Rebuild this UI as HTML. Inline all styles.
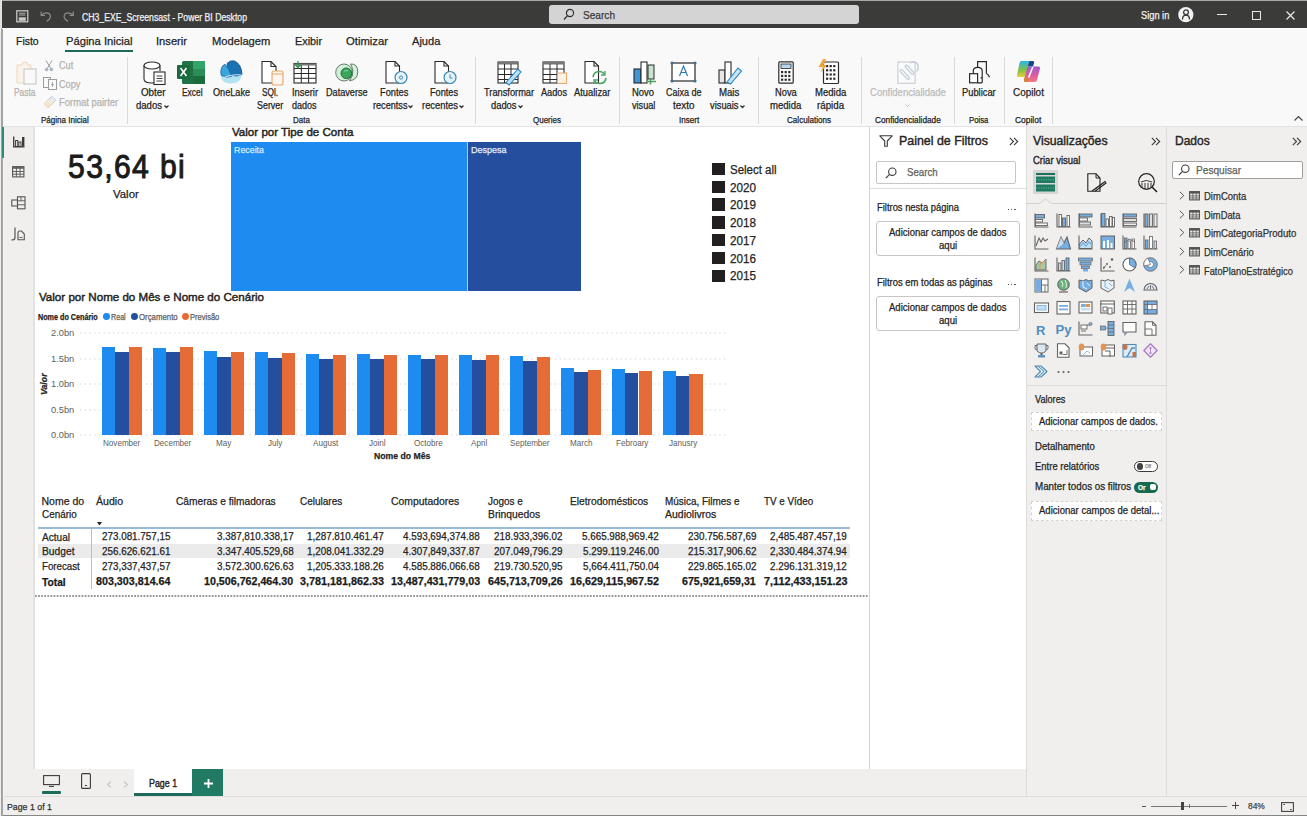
<!DOCTYPE html>
<html><head><meta charset="utf-8">
<style>
*{box-sizing:border-box;margin:0;padding:0}
html,body{width:1307px;height:816px;overflow:hidden;background:#f0efee;font-family:"Liberation Sans",sans-serif;color:#252423;position:relative}
.a{position:absolute}
.t{position:absolute;white-space:nowrap;line-height:1;transform-origin:0 0;-webkit-text-stroke:0.25px currentColor}
svg{overflow:visible}
</style></head><body>
<div class="a" style="left:0px;top:0px;width:1307px;height:1px;background:#a9a9a9;"></div><div class="a" style="left:0px;top:1px;width:1307px;height:27px;background:#3b3b3a;"></div><div class="a" style="left:0px;top:28px;width:1307px;height:99px;background:#f9f9f9;"></div><div class="a" style="left:0px;top:126px;width:1307px;height:1px;background:#e3e3e3;"></div><div class="a" style="left:0px;top:127px;width:34px;height:670px;background:#f0efee;"></div><div class="a" style="left:34px;top:127px;width:835px;height:642px;background:#ffffff;"></div><div class="a" style="left:34px;top:769px;width:992px;height:28px;background:#f0efee;"></div><div class="a" style="left:869px;top:127px;width:157px;height:642px;background:#ffffff;"></div><div class="a" style="left:869px;top:127px;width:1px;height:642px;background:#d4d4d4;"></div><div class="a" style="left:1026px;top:127px;width:141px;height:670px;background:#f0efee;"></div><div class="a" style="left:1026px;top:127px;width:1px;height:670px;background:#dcdcdc;"></div><div class="a" style="left:1167px;top:127px;width:140px;height:670px;background:#f0efee;"></div><div class="a" style="left:1166px;top:127px;width:1px;height:670px;background:#dcdcdc;"></div><div class="a" style="left:0px;top:796px;width:1307px;height:1px;background:#dddddd;"></div><div class="a" style="left:0px;top:797px;width:1307px;height:18px;background:#f0efee;"></div><div class="a" style="left:0px;top:815px;width:1307px;height:1px;background:#858585;"></div><div class="a" style="left:0px;top:0px;width:2px;height:28px;background:#e4e4e4;"></div><div class="a" style="left:0px;top:28px;width:1px;height:788px;background:#eeeeee;"></div><div class="a" style="left:1px;top:28px;width:2px;height:788px;background:#a3a3a3;"></div><div class="a" style="left:3px;top:127px;width:1px;height:670px;background:#f8f8f7;"></div><svg class="a" style="left:16px;top:9.5px;" width="12.5" height="12.5" viewBox="0 0 12.5 12.5"><rect x="0.8" y="0.8" width="11" height="11" fill="none" stroke="#d2d2d2" stroke-width="1.2"/><path d="M3 3.2 H9.5 M3 5 H9.5" stroke="#bdbdbd" stroke-width="0.9"/><rect x="2.8" y="7.3" width="7" height="3.5" fill="#c9c9c9"/></svg><svg class="a" style="left:39.5px;top:9.5px;" width="11.5" height="12" viewBox="0 0 11.5 12"><path d="M1.5 5 Q6 1.5 9 3.5 Q11.5 6 9.5 9 L6.5 11.5" fill="none" stroke="#8c8c8c" stroke-width="1.2"/><path d="M1.2 1.5 V5.5 H5" fill="none" stroke="#8c8c8c" stroke-width="1.2"/></svg><svg class="a" style="left:62.5px;top:9.5px;" width="11.5" height="12" viewBox="0 0 11.5 12"><path d="M10 5 Q5.5 1.5 2.5 3.5 Q0 6 2 9 L5 11.5" fill="none" stroke="#8c8c8c" stroke-width="1.2"/><path d="M10.3 1.5 V5.5 H6.5" fill="none" stroke="#8c8c8c" stroke-width="1.2"/></svg><div class="t" style="left:82.30px;top:12.54px;font-size:10px;color:#f2f2f2;transform:scaleX(0.8680);">CH3_EXE_Screensast - Power BI Desktop</div><div class="a" style="left:549px;top:5px;width:310px;height:19px;background:#d4d4d4;border-radius:3px;"></div><svg class="a" style="left:563px;top:8px;" width="12" height="13" viewBox="0 0 12 13"><circle cx="7" cy="5" r="3.6" fill="none" stroke="#333" stroke-width="1.2"/><path d="M4.5 7.6 L1 11.5" stroke="#333" stroke-width="1.3"/></svg><div class="t" style="left:583.40px;top:9.69px;font-size:11px;color:#3a3a3a;transform:scaleX(0.9181);">Search</div><div class="t" style="left:1141.40px;top:10.11px;font-size:10.5px;color:#f2f2f2;transform:scaleX(0.8815);">Sign in</div><svg class="a" style="left:1177.5px;top:6.8px;" width="16" height="16" viewBox="0 0 16 16"><circle cx="7.8" cy="7.7" r="7.6" fill="#f2f2f2"/><circle cx="8" cy="5.3" r="2.4" fill="none" stroke="#3a3a3a" stroke-width="1.3"/><path d="M4.5 12.5 Q4.5 8.2 8 8 Q11.5 8.2 11.5 12.5" fill="none" stroke="#3a3a3a" stroke-width="1.3"/></svg><div class="a" style="left:1217px;top:14px;width:10px;height:1.3px;background:#e8e8e8;"></div><div class="a" style="left:1252px;top:11px;width:8.5px;height:8.5px;background:transparent;border:1.2px solid #e8e8e8;"></div><svg class="a" style="left:1286px;top:10.5px;" width="9" height="9" viewBox="0 0 9 9"><path d="M0.5 0.5 L8.5 8.5 M8.5 0.5 L0.5 8.5" stroke="#e8e8e8" stroke-width="1.2"/></svg><div class="t" style="left:16.00px;top:35.69px;font-size:11px;color:#252423;transform:scaleX(0.9523);">Fisto</div><div class="t" style="left:65.50px;top:35.69px;font-size:11px;color:#252423;transform:scaleX(1.0163);">Página Inicial</div><div class="t" style="left:155.70px;top:35.69px;font-size:11px;color:#252423;transform:scaleX(1.0143);">Inserir</div><div class="t" style="left:211.50px;top:35.69px;font-size:11px;color:#252423;transform:scaleX(1.0143);">Modelagem</div><div class="t" style="left:294.60px;top:35.69px;font-size:11px;color:#252423;transform:scaleX(0.9853);">Exibir</div><div class="t" style="left:345.50px;top:35.69px;font-size:11px;color:#252423;transform:scaleX(1.0258);">Otimizar</div><div class="t" style="left:412.00px;top:35.69px;font-size:11px;color:#252423;transform:scaleX(1.0059);">Ajuda</div><div class="a" style="left:65px;top:50px;width:67.5px;height:2px;background:#1b6a5a;"></div><div class="a" style="left:2px;top:28px;width:1305px;height:1px;background:#ffffff;"></div><div class="a" style="left:127px;top:57px;width:1px;height:67px;background:#dadada;"></div><div class="a" style="left:475px;top:57px;width:1px;height:67px;background:#dadada;"></div><div class="a" style="left:619px;top:57px;width:1px;height:67px;background:#dadada;"></div><div class="a" style="left:758px;top:57px;width:1px;height:67px;background:#dadada;"></div><div class="a" style="left:861px;top:57px;width:1px;height:67px;background:#dadada;"></div><div class="a" style="left:953.5px;top:57px;width:1px;height:67px;background:#dadada;"></div><div class="a" style="left:1004px;top:57px;width:1px;height:67px;background:#dadada;"></div><div class="a" style="left:1052px;top:57px;width:1px;height:67px;background:#dadada;"></div><div class="t" style="left:13.80px;top:87.94px;font-size:10px;color:#b4b2b0;transform:scaleX(0.8369);">Pasta</div><div class="t" style="left:58.90px;top:61.13px;font-size:10px;color:#b4b2b0;transform:scaleX(0.9125);">Cut</div><div class="t" style="left:59.00px;top:79.83px;font-size:10px;color:#b4b2b0;transform:scaleX(0.9124);">Copy</div><div class="t" style="left:59.40px;top:97.53px;font-size:10px;color:#b4b2b0;transform:scaleX(0.9428);">Format pairter</div><div class="t" style="left:140.80px;top:87.94px;font-size:10px;color:#252423;transform:scaleX(0.9796);">Obter</div><div class="t" style="left:136.00px;top:100.53px;font-size:10px;color:#252423;transform:scaleX(0.9543);">dados</div><div class="t" style="left:181.50px;top:87.94px;font-size:10px;color:#252423;transform:scaleX(0.8383);">Excel</div><div class="t" style="left:212.80px;top:87.94px;font-size:10px;color:#252423;transform:scaleX(0.9141);">OneLake</div><div class="t" style="left:261.80px;top:87.94px;font-size:10px;color:#252423;transform:scaleX(0.8278);">SQl.</div><div class="t" style="left:257.00px;top:100.53px;font-size:10px;color:#252423;transform:scaleX(0.8895);">Server</div><div class="t" style="left:291.70px;top:87.94px;font-size:10px;color:#252423;transform:scaleX(0.9358);">Inserir</div><div class="t" style="left:292.40px;top:100.53px;font-size:10px;color:#252423;transform:scaleX(0.9029);">dados</div><div class="t" style="left:325.80px;top:87.94px;font-size:10px;color:#252423;transform:scaleX(0.9128);">Dataverse</div><div class="t" style="left:379.90px;top:87.94px;font-size:10px;color:#252423;transform:scaleX(0.9257);">Fontes</div><div class="t" style="left:372.50px;top:100.53px;font-size:10px;color:#252423;transform:scaleX(0.9129);">recentss</div><div class="t" style="left:429.60px;top:87.94px;font-size:10px;color:#252423;transform:scaleX(0.9159);">Fontes</div><div class="t" style="left:421.50px;top:100.53px;font-size:10px;color:#252423;transform:scaleX(0.9386);">recentes</div><div class="t" style="left:483.60px;top:87.94px;font-size:10px;color:#252423;transform:scaleX(0.9264);">Transformar</div><div class="t" style="left:491.30px;top:100.53px;font-size:10px;color:#252423;transform:scaleX(0.9359);">dados</div><div class="t" style="left:541.00px;top:87.94px;font-size:10px;color:#252423;transform:scaleX(0.9170);">Aados</div><div class="t" style="left:574.40px;top:87.94px;font-size:10px;color:#252423;transform:scaleX(0.9356);">Atualizar</div><div class="t" style="left:632.20px;top:87.94px;font-size:10px;color:#252423;transform:scaleX(0.9467);">Novo</div><div class="t" style="left:631.80px;top:100.53px;font-size:10px;color:#252423;transform:scaleX(0.9153);">visual</div><div class="t" style="left:665.90px;top:87.94px;font-size:10px;color:#252423;transform:scaleX(0.8995);">Caixa de</div><div class="t" style="left:672.60px;top:100.53px;font-size:10px;color:#252423;transform:scaleX(0.9871);">texto</div><div class="t" style="left:718.70px;top:87.94px;font-size:10px;color:#252423;transform:scaleX(0.9615);">Mais</div><div class="t" style="left:710.40px;top:100.53px;font-size:10px;color:#252423;transform:scaleX(0.9324);">visuais</div><div class="t" style="left:775.00px;top:87.94px;font-size:10px;color:#252423;transform:scaleX(0.9295);">Nova</div><div class="t" style="left:770.40px;top:100.53px;font-size:10px;color:#252423;transform:scaleX(0.9574);">medida</div><div class="t" style="left:814.80px;top:87.94px;font-size:10px;color:#252423;transform:scaleX(0.9543);">Medida</div><div class="t" style="left:817.00px;top:100.53px;font-size:10px;color:#252423;transform:scaleX(0.9749);">rápida</div><div class="t" style="left:869.50px;top:87.94px;font-size:10px;color:#bcbcbc;transform:scaleX(0.9547);">Confidencialidade</div><div class="t" style="left:962.20px;top:87.94px;font-size:10px;color:#252423;transform:scaleX(0.9328);">Publicar</div><div class="t" style="left:1012.70px;top:87.94px;font-size:10px;color:#252423;transform:scaleX(0.9927);">Copilot</div><svg class="a" style="left:164.0px;top:105px;" width="5" height="3" viewBox="0 0 5 3"><path d="M0.5 0.5 L2.5 2.5 L4.5 0.5" fill="none" stroke="#333" stroke-width="1.3"/></svg><svg class="a" style="left:408.0px;top:105px;" width="5" height="3" viewBox="0 0 5 3"><path d="M0.5 0.5 L2.5 2.5 L4.5 0.5" fill="none" stroke="#333" stroke-width="1.3"/></svg><svg class="a" style="left:459.0px;top:105px;" width="5" height="3" viewBox="0 0 5 3"><path d="M0.5 0.5 L2.5 2.5 L4.5 0.5" fill="none" stroke="#333" stroke-width="1.3"/></svg><svg class="a" style="left:518.0px;top:105px;" width="5" height="3" viewBox="0 0 5 3"><path d="M0.5 0.5 L2.5 2.5 L4.5 0.5" fill="none" stroke="#333" stroke-width="1.3"/></svg><svg class="a" style="left:739.5px;top:105px;" width="5" height="3" viewBox="0 0 5 3"><path d="M0.5 0.5 L2.5 2.5 L4.5 0.5" fill="none" stroke="#333" stroke-width="1.3"/></svg><svg class="a" style="left:904.5px;top:104px;" width="5" height="3" viewBox="0 0 5 3"><path d="M0.5 0.5 L2.5 2.5 L4.5 0.5" fill="none" stroke="#bbb" stroke-width="1"/></svg><div class="t" style="left:41.30px;top:115.80px;font-size:8.5px;color:#252423;transform:scaleX(0.9434);">Página Inicial</div><div class="t" style="left:293.20px;top:115.80px;font-size:8.5px;color:#252423;transform:scaleX(0.9357);">Data</div><div class="t" style="left:533.00px;top:115.80px;font-size:8.5px;color:#252423;transform:scaleX(0.9408);">Queries</div><div class="t" style="left:679.20px;top:115.80px;font-size:8.5px;color:#252423;transform:scaleX(0.9549);">Insert</div><div class="t" style="left:787.20px;top:115.80px;font-size:8.5px;color:#252423;transform:scaleX(0.9524);">Calculations</div><div class="t" style="left:874.50px;top:115.80px;font-size:8.5px;color:#252423;transform:scaleX(0.9737);">Confidencialidade</div><div class="t" style="left:969.40px;top:115.80px;font-size:8.5px;color:#252423;transform:scaleX(0.9124);">Poisa</div><div class="t" style="left:1014.90px;top:115.80px;font-size:8.5px;color:#252423;">Copilot</div><svg class="a" style="left:1294px;top:116px;" width="9" height="5" viewBox="0 0 9 5"><path d="M0.5 4.5 L4.5 0.5 L8.5 4.5" fill="none" stroke="#444" stroke-width="1.1"/></svg><svg class="a" style="left:16px;top:61px;" width="21" height="24" viewBox="0 0 21 24"><path d="M1 4 H6 Q6 1 9 1 Q12 1 12 4 H15 V22 H1 Z" fill="#fbf3ea" stroke="#f0d6bd" stroke-width="1"/><rect x="8" y="8" width="12" height="15" fill="#f9f9f9" stroke="#c4c4c4" stroke-width="1"/></svg><svg class="a" style="left:44px;top:59.5px;" width="10" height="12" viewBox="0 0 10 12"><path d="M2 0.5 L6.5 8 M8 0.5 L3.5 8" stroke="#9aa0a8" stroke-width="1"/><circle cx="2.6" cy="9.5" r="1.8" fill="#a8b4c4"/><circle cx="7.4" cy="9.5" r="1.8" fill="#a8b4c4"/></svg><svg class="a" style="left:42.5px;top:77px;" width="14" height="13" viewBox="0 0 14 13"><rect x="0.5" y="0.5" width="7" height="10" fill="none" stroke="#9c9c9c" stroke-width="1"/><rect x="5.5" y="2.5" width="8" height="10" fill="#f9f9f9" stroke="#9c9c9c" stroke-width="1"/><path d="M9.5 5 V10 M8 7.5 H11" stroke="#9c9c9c" stroke-width="0.8"/></svg><svg class="a" style="left:43px;top:96px;" width="13" height="12" viewBox="0 0 13 12"><path d="M1 8 L6 3 L10 7 L5 12 Z" fill="#f7ecda" stroke="#e6cfae" stroke-width="0.9"/><path d="M6 3 L9 0.5 L12.5 4 L10 7" fill="#e8eef5" stroke="#b9c4d0" stroke-width="0.9"/><path d="M3.5 9 L5.5 7 M5 10.5 L7.5 8" stroke="#e6cfae" stroke-width="0.8"/></svg><svg class="a" style="left:143px;top:61px;" width="23" height="25" viewBox="0 0 23 25"><path d="M1 4 V18 Q1 22 9 22 Q12 22 14 21.5" fill="#fff" stroke="#2a2a2a" stroke-width="1.1"/><ellipse cx="9" cy="4.5" rx="8" ry="3.5" fill="#fff" stroke="#2a2a2a" stroke-width="1.1"/><path d="M17 4.5 V10" stroke="#2a2a2a" stroke-width="1.1"/><rect x="11" y="11" width="11" height="12.5" fill="#fff" stroke="#2a2a2a" stroke-width="1.1"/><path d="M13.5 15 H19.5 M13.5 17.5 H19.5 M13.5 20 H19.5" stroke="#2a2a2a" stroke-width="0.9"/></svg><svg class="a" style="left:177px;top:61px;" width="28" height="23" viewBox="0 0 28 23"><rect x="5" y="0" width="23" height="23" rx="1.5" fill="#1f7244"/><rect x="16" y="0" width="12" height="8" fill="#33a46a"/><rect x="16" y="8" width="12" height="7" fill="#2b8c57"/><rect x="16" y="15" width="12" height="8" fill="#1c6b3d"/><rect x="0" y="4" width="13" height="14" rx="1" fill="#1a6a3c"/><path d="M3.5 7 L9.5 15 M9.5 7 L3.5 15" stroke="#fff" stroke-width="1.6"/></svg><svg class="a" style="left:220px;top:60px;" width="23" height="24" viewBox="0 0 23 24"><path d="M0.6 12.5 Q0 23.5 11 23.5 Q22 23.5 21.8 12.5 Z" fill="#b3e2f3"/><path d="M7 3.5 Q10 -0.2 14.5 1 Q21.5 4 22 14.5 Q17 17 12 15.5 Q9 14.5 8 11.5 Z" fill="#1b72b2" stroke="#0f4f86" stroke-width="0.8"/><path d="M1 9.5 Q2 5 5 4.2 Q9.5 8.5 11.5 16.5 Q6 18.5 1.5 15.5 Q0.2 12.5 1 9.5Z" fill="#3ca3dc" stroke="#145e98" stroke-width="0.7"/><path d="M3 18 Q11 14 21.5 15" fill="none" stroke="#d8f3fb" stroke-width="1"/></svg><svg class="a" style="left:261px;top:61px;" width="23" height="25" viewBox="0 0 23 25"><path d="M1 0.5 H10 L15 5.5 V22 H1 Z" fill="#fff" stroke="#2a2a2a" stroke-width="1.1"/><path d="M10 0.5 V5.5 H15" fill="none" stroke="#2a2a2a" stroke-width="1.1"/><rect x="11" y="10" width="11" height="14" rx="2" fill="#fdf6ee" stroke="#e8a76a" stroke-width="1.1"/><path d="M11 13 H22" stroke="#e8a76a" stroke-width="1"/></svg><svg class="a" style="left:293px;top:60.5px;" width="24" height="23" viewBox="0 0 24 23"><rect x="1" y="2.5" width="22" height="19.5" fill="#fff" stroke="#2a2a2a" stroke-width="1.1"/><path d="M1 7.5 H23 M1 12.5 H23 M1 17.3 H23 M8.3 2.5 V22 M15.6 2.5 V22" stroke="#2a2a2a" stroke-width="1"/><rect x="1" y="2.5" width="22" height="2" fill="#777"/><path d="M5 0 V6 M2.5 4 L5 6.5 L7.5 4" fill="none" stroke="#2e9a50" stroke-width="1.3"/></svg><svg class="a" style="left:335px;top:62.5px;" width="24" height="19" viewBox="0 0 24 19"><path d="M15.5 1 Q23 0.5 22.8 9 Q22.5 17 14.5 17.8 Q18.5 12.5 17.8 7.5 Q17 3.5 15.5 1Z" fill="#d3efd8" stroke="#44624c" stroke-width="0.8"/><ellipse cx="9" cy="9.5" rx="8.3" ry="8.5" fill="#d3efd8" stroke="#44624c" stroke-width="0.8"/><circle cx="11.3" cy="10.3" r="5.3" fill="#3aa65b" stroke="#1f6b3a" stroke-width="1"/><path d="M9 8.5 Q10.5 6.8 13 7.8" fill="none" stroke="#8fd8a2" stroke-width="1"/></svg><svg class="a" style="left:385px;top:61px;" width="24" height="23" viewBox="0 0 24 23"><path d="M1 0.5 H10 L14.5 5 V22 H1 Z" fill="#fff" stroke="#2a2a2a" stroke-width="1.1"/><path d="M10 0.5 V5 H14.5" fill="none" stroke="#2a2a2a" stroke-width="1.1"/><circle cx="16" cy="16.5" r="6" fill="#e6f3fb" stroke="#3a87b6" stroke-width="1.2"/><circle cx="16" cy="16.5" r="1.6" fill="none" stroke="#3a87b6" stroke-width="1"/></svg><svg class="a" style="left:434px;top:61px;" width="24" height="23" viewBox="0 0 24 23"><path d="M1 0.5 H10 L14.5 5 V22 H1 Z" fill="#fff" stroke="#2a2a2a" stroke-width="1.1"/><path d="M10 0.5 V5 H14.5" fill="none" stroke="#2a2a2a" stroke-width="1.1"/><circle cx="16" cy="16.5" r="6" fill="#e6f3fb" stroke="#3a87b6" stroke-width="1.2"/><path d="M16 13.5 V17 H18.5" fill="none" stroke="#3a87b6" stroke-width="1"/></svg><svg class="a" style="left:497px;top:61px;" width="25" height="23" viewBox="0 0 25 23"><rect x="1" y="1" width="20" height="21" fill="#fff" stroke="#2a2a2a" stroke-width="1.1"/><rect x="1" y="1" width="20" height="2.5" fill="#777"/><path d="M1 8 H21 M1 13.5 H21 M1 18.5 H21 M7.5 3 V22 M14 3 V22" stroke="#2a2a2a" stroke-width="1"/><path d="M9 21.5 L21 8 L24 11 L12 24 Z" fill="#bfe2f5" stroke="#2a86c0" stroke-width="1.1"/></svg><svg class="a" style="left:542px;top:61px;" width="25" height="23" viewBox="0 0 25 23"><rect x="1" y="1" width="21" height="21" fill="#fff" stroke="#2a2a2a" stroke-width="1.1"/><rect x="1" y="1" width="21" height="2.5" fill="#777"/><path d="M1 8 H22 M1 13.5 H22 M1 18.5 H22 M8 3 V22 M15 3 V22" stroke="#2a2a2a" stroke-width="1"/><rect x="15.5" y="12" width="9" height="10.5" fill="#fdf1e4" stroke="#e9a66b" stroke-width="1"/></svg><svg class="a" style="left:583.5px;top:61px;" width="23" height="23" viewBox="0 0 23 23"><path d="M1 0.5 H10 L14.5 5 V22 H1 Z" fill="#fff" stroke="#2a2a2a" stroke-width="1.1"/><path d="M10 0.5 V5 H14.5" fill="none" stroke="#2a2a2a" stroke-width="1.1"/><path d="M9 16 Q10 10 16 10.5 Q19 11 20.5 13" fill="none" stroke="#4aa564" stroke-width="1.6"/><path d="M22 17 Q21 23 15 22.5 Q12 22 10.5 20" fill="none" stroke="#4aa564" stroke-width="1.6"/><path d="M21 10 V14 H17" fill="none" stroke="#4aa564" stroke-width="1.3"/><path d="M10 23 V19 H14" fill="none" stroke="#4aa564" stroke-width="1.3"/></svg><svg class="a" style="left:632.5px;top:61px;" width="24" height="24" viewBox="0 0 24 24"><rect x="1" y="8" width="7" height="14" fill="#3f95d6" stroke="#2a2a2a" stroke-width="1.1"/><rect x="8" y="1" width="6" height="21" fill="#fff" stroke="#2a2a2a" stroke-width="1.1"/><rect x="15" y="4" width="6" height="14" fill="#c8e4cc" stroke="#2a2a2a" stroke-width="1"/><path d="M17.5 18 V23.5 M15 20.5 H23" stroke="#47a362" stroke-width="1.5"/></svg><svg class="a" style="left:670px;top:61px;" width="27" height="22" viewBox="0 0 27 22"><rect x="2" y="2" width="23" height="18" fill="#fff" stroke="#2a2a2a" stroke-width="1.2"/><circle cx="2" cy="2" r="1.6" fill="#3a6f98"/><circle cx="25" cy="2" r="1.6" fill="#3a6f98"/><circle cx="2" cy="20" r="1.6" fill="#3a6f98"/><circle cx="25" cy="20" r="1.6" fill="#3a6f98"/><path d="M9.5 15 L13.5 5 L17.5 15 M11 11.5 H16" fill="none" stroke="#2e78b3" stroke-width="1.2"/></svg><svg class="a" style="left:718px;top:61px;" width="24" height="23" viewBox="0 0 24 23"><rect x="1" y="9" width="6" height="13" fill="#e6e6e6" stroke="#2a2a2a" stroke-width="1.1"/><rect x="7" y="1" width="6" height="21" fill="#fff" stroke="#2a2a2a" stroke-width="1.1"/><path d="M9 21 L20 7 L23.5 10 L12.5 23 Z" fill="#c6e3f4" stroke="#2a86c0" stroke-width="1.1"/></svg><svg class="a" style="left:778px;top:61px;" width="16" height="23" viewBox="0 0 16 23"><rect x="0.8" y="0.8" width="14.4" height="21.4" rx="1" fill="#fff" stroke="#2a2a2a" stroke-width="1.2"/><rect x="3" y="3" width="10" height="4.5" fill="#b8d7ee" stroke="#2a2a2a" stroke-width="0.8"/><rect x="3.0" y="10.0" width="2.2" height="2.2" fill="#2a2a2a"/><rect x="3.0" y="13.8" width="2.2" height="2.2" fill="#2a2a2a"/><rect x="3.0" y="17.6" width="2.2" height="2.2" fill="#2a2a2a"/><rect x="6.6" y="10.0" width="2.2" height="2.2" fill="#2a2a2a"/><rect x="6.6" y="13.8" width="2.2" height="2.2" fill="#2a2a2a"/><rect x="6.6" y="17.6" width="2.2" height="2.2" fill="#2a2a2a"/><rect x="10.2" y="10.0" width="2.2" height="2.2" fill="#2a2a2a"/><rect x="10.2" y="13.8" width="2.2" height="2.2" fill="#2a2a2a"/><rect x="10.2" y="17.6" width="2.2" height="2.2" fill="#2a2a2a"/></svg><svg class="a" style="left:817.5px;top:59px;" width="21" height="25" viewBox="0 0 21 25"><rect x="5.5" y="3" width="15" height="21.5" rx="1" fill="#fff" stroke="#2a2a2a" stroke-width="1.2"/><rect x="8.0" y="6.0" width="2.2" height="2.2" fill="#2a2a2a"/><rect x="8.0" y="10.2" width="2.2" height="2.2" fill="#2a2a2a"/><rect x="8.0" y="14.4" width="2.2" height="2.2" fill="#2a2a2a"/><rect x="8.0" y="18.6" width="2.2" height="2.2" fill="#2a2a2a"/><rect x="11.6" y="6.0" width="2.2" height="2.2" fill="#2a2a2a"/><rect x="11.6" y="10.2" width="2.2" height="2.2" fill="#2a2a2a"/><rect x="11.6" y="14.4" width="2.2" height="2.2" fill="#2a2a2a"/><rect x="11.6" y="18.6" width="2.2" height="2.2" fill="#2a2a2a"/><rect x="15.2" y="6.0" width="2.2" height="2.2" fill="#2a2a2a"/><rect x="15.2" y="10.2" width="2.2" height="2.2" fill="#2a2a2a"/><rect x="15.2" y="14.4" width="2.2" height="2.2" fill="#2a2a2a"/><rect x="15.2" y="18.6" width="2.2" height="2.2" fill="#2a2a2a"/><path d="M5 0 L0.5 8 H5 L2 14 L9 6 H5.5 L8 0 Z" fill="#f2a43a"/></svg><svg class="a" style="left:896.5px;top:59.5px;" width="23" height="24" viewBox="0 0 23 24"><rect x="0.9" y="2" width="17.2" height="21.3" fill="#f8fafc" stroke="#cdcfd2" stroke-width="1.2"/><path d="M4.5 11 L11 18" stroke="#c3ccd6" stroke-width="4" stroke-linecap="round"/><path d="M4.5 11 L11 18" stroke="#f3f6f9" stroke-width="1.6" stroke-linecap="round"/><path d="M9.5 6.5 L15.5 13" stroke="#c3ccd6" stroke-width="4" stroke-linecap="round"/><path d="M9.5 6.5 L15.5 13" stroke="#f3f6f9" stroke-width="1.6" stroke-linecap="round"/><path d="M13 3 Q17.5 0.5 20.5 4 Q22.5 8 19.5 11.5" fill="none" stroke="#c3ccd6" stroke-width="1.4"/></svg><svg class="a" style="left:969px;top:61px;" width="22" height="23" viewBox="0 0 22 23"><path d="M8.6 6 V0.7 H17.4 V12.5" fill="none" stroke="#2a2a2a" stroke-width="1.2"/><path d="M4.3 12.7 V9.5 Q4.5 6.3 8.8 6.3 Q12.8 6.3 13.2 9.5 V21.8" fill="#fff" stroke="#2a2a2a" stroke-width="1.2"/><rect x="0.6" y="12.7" width="8" height="9.1" fill="#fff" stroke="#2a2a2a" stroke-width="1.2"/><path d="M8.6 21.8 H13.2 M11.5 16.8 H13.2" stroke="#2a2a2a" stroke-width="1.2"/><path d="M17.4 12.5 Q19.5 13.5 20.5 16.3" fill="none" stroke="#2a2a2a" stroke-width="1.2"/></svg><svg class="a" style="left:1016px;top:60px;" width="25" height="23" viewBox="0 0 25 23"><defs><linearGradient id="cg1" x1="0" y1="0" x2="0" y2="1"><stop offset="0" stop-color="#2fb2ec"/><stop offset="0.55" stop-color="#7cc243"/><stop offset="1" stop-color="#e6cf3a"/></linearGradient><linearGradient id="cg2" x1="0" y1="0" x2="0" y2="1"><stop offset="0" stop-color="#9d55d2"/><stop offset="0.6" stop-color="#e05f9c"/><stop offset="1" stop-color="#f47a78"/></linearGradient></defs><path d="M5 1 H16.5 Q18.5 1 18 3 L14 15.5 Q13.5 17 12 17 H2.5 Q0.5 17 1 15 L3.5 3 Q4 1 5 1Z" fill="url(#cg1)"/><path d="M13.5 1 H16.5 Q18.5 1 18 3 L17 6 H12Z" fill="#1d3f8f"/><path d="M12 6.5 H22.5 Q24.5 6.5 24 8.5 L21 20 Q20.5 22 19 22 H9.5 Q7.5 22 8 20 L11 8.5 Q11.5 6.5 12 6.5Z" fill="url(#cg2)"/><path d="M7.8 18 H12.5 L11.5 22 H9.5 Q7.5 22 8 20Z" fill="#d4862a"/><path d="M16.8 7 L12.6 17.5" stroke="#fff" stroke-width="1.6"/></svg><div class="a" style="left:33px;top:127px;width:1.8px;height:642px;background:#e2e2e2;"></div><div class="t" style="left:67.9px;top:150.04px;font-size:33.5px;color:#1b1b1b;letter-spacing:1.5px;transform:scaleX(0.9005);-webkit-text-stroke:1px #1b1b1b;">53,64 bi</div><div class="t" style="left:113.00px;top:189.07px;font-size:11.5px;color:#252423;transform:scaleX(0.9926);">Valor</div><div class="t" style="left:231.50px;top:127.43px;font-size:11.3px;color:#252423;transform:scaleX(1.0246);-webkit-text-stroke:0.45px #252423;">Valor por Tipe de Conta</div><div class="a" style="left:231px;top:142px;width:236px;height:148.5px;background:#1d8bf0;"></div><div class="a" style="left:467px;top:142px;width:1px;height:148.5px;background:#a3cfff;"></div><div class="a" style="left:468px;top:142px;width:113px;height:148.5px;background:#264e9e;"></div><div class="t" style="left:233.80px;top:144.99px;font-size:9.7px;color:#d6ecff;transform:scaleX(0.9133);">Receita</div><div class="t" style="left:470.80px;top:145.19px;font-size:9.7px;color:#e6ecf6;transform:scaleX(0.9285);">Despesa</div><div class="a" style="left:712.4px;top:162.9px;width:12.4px;height:12.3px;background:#231f20;"></div><div class="t" style="left:729.80px;top:163.84px;font-size:12px;color:#252423;transform:scaleX(0.9570);">Select all</div><div class="a" style="left:712.4px;top:180.67000000000002px;width:12.4px;height:12.3px;background:#231f20;"></div><div class="t" style="left:729.80px;top:181.61px;font-size:12px;color:#252423;transform:scaleX(0.9740);">2020</div><div class="a" style="left:712.4px;top:198.44px;width:12.4px;height:12.3px;background:#231f20;"></div><div class="t" style="left:729.80px;top:199.38px;font-size:12px;color:#252423;transform:scaleX(0.9740);">2019</div><div class="a" style="left:712.4px;top:216.21px;width:12.4px;height:12.3px;background:#231f20;"></div><div class="t" style="left:729.80px;top:217.15px;font-size:12px;color:#252423;transform:scaleX(0.9740);">2018</div><div class="a" style="left:712.4px;top:233.98000000000002px;width:12.4px;height:12.3px;background:#231f20;"></div><div class="t" style="left:729.80px;top:234.92px;font-size:12px;color:#252423;transform:scaleX(0.9740);">2017</div><div class="a" style="left:712.4px;top:251.75px;width:12.4px;height:12.3px;background:#231f20;"></div><div class="t" style="left:729.80px;top:252.69px;font-size:12px;color:#252423;transform:scaleX(0.9740);">2016</div><div class="a" style="left:712.4px;top:269.52px;width:12.4px;height:12.3px;background:#231f20;"></div><div class="t" style="left:729.80px;top:270.46px;font-size:12px;color:#252423;transform:scaleX(0.9740);">2015</div><div class="t" style="left:38.90px;top:292.27px;font-size:11.5px;color:#252423;transform:scaleX(1.0067);-webkit-text-stroke:0.45px #252423;">Valor por Nome do Mês e Nome do Cenário</div><div class="t" style="left:38.40px;top:312.70px;font-size:8.5px;color:#252423;font-weight:bold;transform:scaleX(0.8484);">Nome do Cenário</div><div class="a" style="left:103.3px;top:313.40000000000003px;width:6.8px;height:6.8px;border-radius:50%;background:#1d8bf0"></div><div class="a" style="left:131.1px;top:313.40000000000003px;width:6.8px;height:6.8px;border-radius:50%;background:#244e9e"></div><div class="a" style="left:182.29999999999998px;top:313.40000000000003px;width:6.8px;height:6.8px;border-radius:50%;background:#e66c37"></div><div class="t" style="left:111.40px;top:312.54px;font-size:8.7px;color:#605e5c;transform:scaleX(0.8227);">Real</div><div class="t" style="left:139.00px;top:312.54px;font-size:8.7px;color:#605e5c;transform:scaleX(0.9006);">Orçamento</div><div class="t" style="left:190.40px;top:312.54px;font-size:8.7px;color:#605e5c;transform:scaleX(0.8669);">Previsão</div><div class="t" style="left:51.40px;top:327.96px;font-size:9.5px;color:#605e5c;transform:scaleX(0.9801);-webkit-text-stroke:0;">2.0bn</div><svg class="a" style="left:80px;top:331.9px;" width="646" height="2" viewBox="0 0 646 2"><line x1="0" y1="1" x2="646" y2="1" stroke="#d6d6d6" stroke-width="1.2" stroke-dasharray="1.5 3.2"/></svg><div class="t" style="left:51.40px;top:353.59px;font-size:9.5px;color:#605e5c;transform:scaleX(0.9801);-webkit-text-stroke:0;">1.5bn</div><svg class="a" style="left:80px;top:357.53px;" width="646" height="2" viewBox="0 0 646 2"><line x1="0" y1="1" x2="646" y2="1" stroke="#d6d6d6" stroke-width="1.2" stroke-dasharray="1.5 3.2"/></svg><div class="t" style="left:51.40px;top:379.22px;font-size:9.5px;color:#605e5c;transform:scaleX(0.9801);-webkit-text-stroke:0;">1.0bn</div><svg class="a" style="left:80px;top:383.16px;" width="646" height="2" viewBox="0 0 646 2"><line x1="0" y1="1" x2="646" y2="1" stroke="#d6d6d6" stroke-width="1.2" stroke-dasharray="1.5 3.2"/></svg><div class="t" style="left:51.40px;top:404.85px;font-size:9.5px;color:#605e5c;transform:scaleX(0.9801);-webkit-text-stroke:0;">0.5bn</div><svg class="a" style="left:80px;top:408.79px;" width="646" height="2" viewBox="0 0 646 2"><line x1="0" y1="1" x2="646" y2="1" stroke="#d6d6d6" stroke-width="1.2" stroke-dasharray="1.5 3.2"/></svg><div class="t" style="left:51.40px;top:430.48px;font-size:9.5px;color:#605e5c;transform:scaleX(0.9801);-webkit-text-stroke:0;">0.0bn</div><svg class="a" style="left:80px;top:434.42px;" width="646" height="2" viewBox="0 0 646 2"><line x1="0" y1="1" x2="646" y2="1" stroke="#d6d6d6" stroke-width="1.2" stroke-dasharray="1.5 3.2"/></svg><div class="a" style="left:101.90px;top:347.20px;width:13.45px;height:88.20px;background:#1d8bf0;"></div><div class="a" style="left:115.35px;top:351.80px;width:13.45px;height:83.60px;background:#244e9e;"></div><div class="a" style="left:128.80px;top:346.80px;width:13.45px;height:88.60px;background:#e66c37;"></div><div class="t" style="left:103.45px;top:439.43px;font-size:9.3px;color:#605e5c;transform:scaleX(0.8700);-webkit-text-stroke:0;">November</div><div class="a" style="left:152.87px;top:347.70px;width:13.45px;height:87.70px;background:#1d8bf0;"></div><div class="a" style="left:166.32px;top:352.30px;width:13.45px;height:83.10px;background:#244e9e;"></div><div class="a" style="left:179.77px;top:347.20px;width:13.45px;height:88.20px;background:#e66c37;"></div><div class="t" style="left:154.42px;top:439.43px;font-size:9.3px;color:#605e5c;transform:scaleX(0.8700);-webkit-text-stroke:0;">December</div><div class="a" style="left:203.84px;top:351.30px;width:13.45px;height:84.10px;background:#1d8bf0;"></div><div class="a" style="left:217.29px;top:356.90px;width:13.45px;height:78.50px;background:#244e9e;"></div><div class="a" style="left:230.74px;top:352.00px;width:13.45px;height:83.40px;background:#e66c37;"></div><div class="t" style="left:216.40px;top:439.43px;font-size:9.3px;color:#605e5c;transform:scaleX(0.8700);-webkit-text-stroke:0;">May</div><div class="a" style="left:254.81px;top:351.60px;width:13.45px;height:83.80px;background:#1d8bf0;"></div><div class="a" style="left:268.26px;top:357.50px;width:13.45px;height:77.90px;background:#244e9e;"></div><div class="a" style="left:281.71px;top:352.70px;width:13.45px;height:82.70px;background:#e66c37;"></div><div class="t" style="left:267.82px;top:439.43px;font-size:9.3px;color:#605e5c;transform:scaleX(0.8700);-webkit-text-stroke:0;">July</div><div class="a" style="left:305.78px;top:353.90px;width:13.45px;height:81.50px;background:#1d8bf0;"></div><div class="a" style="left:319.23px;top:359.10px;width:13.45px;height:76.30px;background:#244e9e;"></div><div class="a" style="left:332.68px;top:354.60px;width:13.45px;height:80.80px;background:#e66c37;"></div><div class="t" style="left:313.39px;top:439.43px;font-size:9.3px;color:#605e5c;transform:scaleX(0.8700);-webkit-text-stroke:0;">August</div><div class="a" style="left:356.75px;top:353.90px;width:13.45px;height:81.50px;background:#1d8bf0;"></div><div class="a" style="left:370.20px;top:359.40px;width:13.45px;height:76.00px;background:#244e9e;"></div><div class="a" style="left:383.65px;top:354.80px;width:13.45px;height:80.60px;background:#e66c37;"></div><div class="t" style="left:368.63px;top:439.43px;font-size:9.3px;color:#605e5c;transform:scaleX(0.8700);-webkit-text-stroke:0;">Joinl</div><div class="a" style="left:407.72px;top:354.70px;width:13.45px;height:80.70px;background:#1d8bf0;"></div><div class="a" style="left:421.17px;top:359.40px;width:13.45px;height:76.00px;background:#244e9e;"></div><div class="a" style="left:434.62px;top:355.20px;width:13.45px;height:80.20px;background:#e66c37;"></div><div class="t" style="left:413.53px;top:439.43px;font-size:9.3px;color:#605e5c;transform:scaleX(0.8700);-webkit-text-stroke:0;">Octobre</div><div class="a" style="left:458.69px;top:354.70px;width:13.45px;height:80.70px;background:#1d8bf0;"></div><div class="a" style="left:472.14px;top:359.90px;width:13.45px;height:75.50px;background:#244e9e;"></div><div class="a" style="left:485.59px;top:355.20px;width:13.45px;height:80.20px;background:#e66c37;"></div><div class="t" style="left:470.80px;top:439.43px;font-size:9.3px;color:#605e5c;transform:scaleX(0.8700);-webkit-text-stroke:0;">April</div><div class="a" style="left:509.66px;top:356.00px;width:13.45px;height:79.40px;background:#1d8bf0;"></div><div class="a" style="left:523.11px;top:361.20px;width:13.45px;height:74.20px;background:#244e9e;"></div><div class="a" style="left:536.56px;top:356.50px;width:13.45px;height:78.90px;background:#e66c37;"></div><div class="t" style="left:510.08px;top:439.43px;font-size:9.3px;color:#605e5c;transform:scaleX(0.8700);-webkit-text-stroke:0;">September</div><div class="a" style="left:560.63px;top:368.00px;width:13.45px;height:67.40px;background:#1d8bf0;"></div><div class="a" style="left:574.08px;top:372.40px;width:13.45px;height:63.00px;background:#244e9e;"></div><div class="a" style="left:587.53px;top:370.30px;width:13.45px;height:65.10px;background:#e66c37;"></div><div class="t" style="left:569.59px;top:439.43px;font-size:9.3px;color:#605e5c;transform:scaleX(0.8700);-webkit-text-stroke:0;">March</div><div class="a" style="left:611.60px;top:368.50px;width:13.45px;height:66.90px;background:#1d8bf0;"></div><div class="a" style="left:625.05px;top:373.20px;width:13.45px;height:62.20px;background:#244e9e;"></div><div class="a" style="left:638.50px;top:370.80px;width:13.45px;height:64.60px;background:#e66c37;"></div><div class="t" style="left:615.62px;top:439.43px;font-size:9.3px;color:#605e5c;transform:scaleX(0.8700);-webkit-text-stroke:0;">Febroary</div><div class="a" style="left:662.57px;top:371.10px;width:13.45px;height:64.30px;background:#1d8bf0;"></div><div class="a" style="left:676.02px;top:375.50px;width:13.45px;height:59.90px;background:#244e9e;"></div><div class="a" style="left:689.47px;top:373.70px;width:13.45px;height:61.70px;background:#e66c37;"></div><div class="t" style="left:668.61px;top:439.43px;font-size:9.3px;color:#605e5c;transform:scaleX(0.8700);-webkit-text-stroke:0;">Janusry</div><div class="t" style="left:374.00px;top:450.76px;font-size:9.5px;color:#252423;font-weight:bold;transform:scaleX(0.9116);">Nome do Mês</div><div class="t" style="left:39px;top:395px;font-size:9.5px;font-weight:bold;font-style:italic;color:#252423;transform:rotate(-90deg) scaleX(0.92);transform-origin:0 0;">Valor</div><div class="t" style="left:41.50px;top:495.71px;font-size:10.5px;color:#252423;">Nome do</div><div class="t" style="left:41.50px;top:509.01px;font-size:10.5px;color:#252423;transform:scaleX(0.9437);">Cenário</div><div class="t" style="left:95.50px;top:495.71px;font-size:10.5px;color:#252423;transform:scaleX(1.0091);">Áudio</div><div class="t" style="left:176.30px;top:495.71px;font-size:10.5px;color:#252423;transform:scaleX(0.9708);">Câmeras e filmadoras</div><div class="t" style="left:300.00px;top:495.71px;font-size:10.5px;color:#252423;transform:scaleX(0.9515);">Celulares</div><div class="t" style="left:390.90px;top:495.71px;font-size:10.5px;color:#252423;transform:scaleX(0.9903);">Computadores</div><div class="t" style="left:487.50px;top:495.71px;font-size:10.5px;color:#252423;transform:scaleX(0.9490);">Jogos e</div><div class="t" style="left:487.50px;top:509.01px;font-size:10.5px;color:#252423;transform:scaleX(0.9827);">Brinquedos</div><div class="t" style="left:569.50px;top:495.71px;font-size:10.5px;color:#252423;transform:scaleX(0.9710);">Eletrodomésticos</div><div class="t" style="left:665.00px;top:495.71px;font-size:10.5px;color:#252423;transform:scaleX(0.9471);">Música, Filmes e</div><div class="t" style="left:665.00px;top:509.01px;font-size:10.5px;color:#252423;">Audiolivros</div><div class="t" style="left:763.50px;top:495.71px;font-size:10.5px;color:#252423;transform:scaleX(0.9366);">TV e Vídeo</div><svg class="a" style="left:97px;top:521.5px;" width="5" height="4" viewBox="0 0 5 4"><path d="M0 0 H5 L2.5 3.5Z" fill="#252423"/></svg><div class="a" style="left:38.4px;top:543.8px;width:811.6px;height:14.4px;background:#ebebeb;"></div><div class="a" style="left:38.4px;top:527.3px;width:811.6px;height:2px;background:#94bcd8;"></div><div class="a" style="left:90.6px;top:529px;width:1.5px;height:60px;background:#a3c4de;"></div><div class="t" style="left:41.50px;top:531.51px;font-size:10.5px;color:#252423;transform:scaleX(0.9595);">Actual</div><div class="t" style="left:101.57px;top:531.43px;font-size:10.6px;color:#252423;transform:scaleX(0.9292);">273.081.757,15</div><div class="t" style="left:216.56px;top:531.43px;font-size:10.6px;color:#252423;transform:scaleX(0.9292);">3.387,810.338,17</div><div class="t" style="left:307.46px;top:531.43px;font-size:10.6px;color:#252423;transform:scaleX(0.9292);">1,287.810.461.47</div><div class="t" style="left:403.36px;top:531.43px;font-size:10.6px;color:#252423;transform:scaleX(0.9292);">4.593,694,374.88</div><div class="t" style="left:493.67px;top:531.43px;font-size:10.6px;color:#252423;transform:scaleX(0.9292);">218.933,396.02</div><div class="t" style="left:581.86px;top:531.43px;font-size:10.6px;color:#252423;transform:scaleX(0.9292);">5.665.988,969.42</div><div class="t" style="left:687.57px;top:531.43px;font-size:10.6px;color:#252423;transform:scaleX(0.9292);">230.756.587,69</div><div class="t" style="left:770.36px;top:531.43px;font-size:10.6px;color:#252423;transform:scaleX(0.9292);">2,485.487.457,19</div><div class="t" style="left:41.50px;top:546.21px;font-size:10.5px;color:#252423;transform:scaleX(0.9766);">Budget</div><div class="t" style="left:101.57px;top:546.13px;font-size:10.6px;color:#252423;transform:scaleX(0.9292);">256.626.621.61</div><div class="t" style="left:216.56px;top:546.13px;font-size:10.6px;color:#252423;transform:scaleX(0.9292);">3.347.405.529,68</div><div class="t" style="left:307.46px;top:546.13px;font-size:10.6px;color:#252423;transform:scaleX(0.9292);">1,208.041.332.29</div><div class="t" style="left:403.36px;top:546.13px;font-size:10.6px;color:#252423;transform:scaleX(0.9292);">4.307,849,337.87</div><div class="t" style="left:493.67px;top:546.13px;font-size:10.6px;color:#252423;transform:scaleX(0.9292);">207.049,796.29</div><div class="t" style="left:582.59px;top:546.13px;font-size:10.6px;color:#252423;transform:scaleX(0.9292);">5.299.119.246.00</div><div class="t" style="left:687.57px;top:546.13px;font-size:10.6px;color:#252423;transform:scaleX(0.9292);">215.317,906.62</div><div class="t" style="left:770.36px;top:546.13px;font-size:10.6px;color:#252423;transform:scaleX(0.9292);">2,330.484.374.94</div><div class="t" style="left:41.50px;top:561.01px;font-size:10.5px;color:#252423;transform:scaleX(0.9254);">Forecast</div><div class="t" style="left:101.57px;top:560.93px;font-size:10.6px;color:#252423;transform:scaleX(0.9292);">273,337,437,57</div><div class="t" style="left:216.56px;top:560.93px;font-size:10.6px;color:#252423;transform:scaleX(0.9292);">3.572.300.626.63</div><div class="t" style="left:307.46px;top:560.93px;font-size:10.6px;color:#252423;transform:scaleX(0.9292);">1,205.333.188.26</div><div class="t" style="left:403.36px;top:560.93px;font-size:10.6px;color:#252423;transform:scaleX(0.9292);">4.585.886.066.68</div><div class="t" style="left:493.67px;top:560.93px;font-size:10.6px;color:#252423;transform:scaleX(0.9292);">219.730.520,95</div><div class="t" style="left:582.59px;top:560.93px;font-size:10.6px;color:#252423;transform:scaleX(0.9292);">5,664.411,750.04</div><div class="t" style="left:687.57px;top:560.93px;font-size:10.6px;color:#252423;transform:scaleX(0.9292);">229.865.165.02</div><div class="t" style="left:770.36px;top:560.93px;font-size:10.6px;color:#252423;transform:scaleX(0.9292);">2.296.131.319,12</div><div class="t" style="left:41.50px;top:577.11px;font-size:10.5px;color:#1b1b1b;font-weight:bold;transform:scaleX(0.9752);">Total</div><div class="t" style="left:95.50px;top:577.28px;font-size:10.3px;color:#1b1b1b;font-weight:bold;transform:scaleX(1.0409);">803,303,814.64</div><div class="t" style="left:204.10px;top:577.28px;font-size:10.3px;color:#1b1b1b;font-weight:bold;transform:scaleX(1.0374);">10,506,762,464.30</div><div class="t" style="left:300.00px;top:577.28px;font-size:10.3px;color:#1b1b1b;font-weight:bold;transform:scaleX(1.0491);">3,781,181,862.33</div><div class="t" style="left:390.90px;top:577.28px;font-size:10.3px;color:#1b1b1b;font-weight:bold;transform:scaleX(1.0374);">13,487,431,779,03</div><div class="t" style="left:487.50px;top:577.28px;font-size:10.3px;color:#1b1b1b;font-weight:bold;transform:scaleX(1.0423);">645,713,709,26</div><div class="t" style="left:569.50px;top:577.28px;font-size:10.3px;color:#1b1b1b;font-weight:bold;transform:scaleX(1.0431);">16,629,115,967.52</div><div class="t" style="left:682.30px;top:577.28px;font-size:10.3px;color:#1b1b1b;font-weight:bold;transform:scaleX(1.0297);">675,921,659,31</div><div class="t" style="left:763.50px;top:577.28px;font-size:10.3px;color:#1b1b1b;font-weight:bold;transform:scaleX(1.0491);">7,112,433,151.23</div><svg class="a" style="left:35px;top:594.6px;" width="833" height="2" viewBox="0 0 833 2"><line x1="0" y1="1" x2="833" y2="1" stroke="#767676" stroke-width="1.7" stroke-dasharray="1.8 1.3"/></svg><svg class="a" style="left:879px;top:135px;" width="14" height="12" viewBox="0 0 14 12"><path d="M0.8 0.8 H13.2 L8.3 6 V11.2 H5.7 V6 Z" fill="none" stroke="#3b3a39" stroke-width="1.1" stroke-linejoin="round"/></svg><div class="t" style="left:898.90px;top:135.12px;font-size:12.5px;color:#252423;transform:scaleX(0.9919);-webkit-text-stroke:0.4px #252423;">Painel de Filtros</div><svg class="a" style="left:1008.5px;top:136.5px;" width="10" height="9" viewBox="0 0 10 9"><path d="M0.8 0.8 L4.5 4.5 L0.8 8.2 M5 0.8 L8.7 4.5 L5 8.2" fill="none" stroke="#3b3a39" stroke-width="1.1"/></svg><div class="a" style="left:876.3px;top:161px;width:140px;height:22.7px;border:1px solid #c8c6c4;border-radius:2px;background:#fff"></div><svg class="a" style="left:885.2px;top:167px;" width="12" height="12" viewBox="0 0 12 12"><circle cx="7.3" cy="4.7" r="3.7" fill="none" stroke="#3b3a39" stroke-width="1.1"/><path d="M4.6 7.4 L0.8 11.2" stroke="#3b3a39" stroke-width="1.2"/></svg><div class="t" style="left:907.20px;top:166.69px;font-size:11px;color:#605e5c;transform:scaleX(0.8780);">Search</div><div class="a" style="left:870px;top:187.5px;width:156px;height:1.2px;background:#e1dfdd;"></div><div class="t" style="left:876.60px;top:203.44px;font-size:10px;color:#252423;transform:scaleX(0.9385);">Filtros nesta página</div><div class="t" style="left:876.60px;top:278.04px;font-size:10px;color:#252423;transform:scaleX(0.9437);">Filtros em todas as páginas</div><div class="a" style="left:1007.5px;top:208.9px;width:1.3px;height:1.3px;background:#555;"></div><div class="a" style="left:1010.9px;top:208.9px;width:1.3px;height:1.3px;background:#555;"></div><div class="a" style="left:1014.3px;top:208.9px;width:1.3px;height:1.3px;background:#555;"></div><div class="a" style="left:1007.5px;top:283.9px;width:1.3px;height:1.3px;background:#555;"></div><div class="a" style="left:1010.9px;top:283.9px;width:1.3px;height:1.3px;background:#555;"></div><div class="a" style="left:1014.3px;top:283.9px;width:1.3px;height:1.3px;background:#555;"></div><div class="a" style="left:876.3px;top:221px;width:143.4px;height:34.7px;border:1px solid #c8c6c4;border-radius:3px;background:#fff"></div><div class="t" style="left:889.00px;top:227.53px;font-size:10px;color:#252423;transform:scaleX(0.9521);">Adicionar campos de dados</div><div class="t" style="left:938.65px;top:240.73px;font-size:10px;color:#252423;transform:scaleX(0.9626);">aqui</div><div class="a" style="left:876.3px;top:296px;width:143.4px;height:35.1px;border:1px solid #c8c6c4;border-radius:3px;background:#fff"></div><div class="t" style="left:889.00px;top:302.54px;font-size:10px;color:#252423;transform:scaleX(0.9521);">Adicionar campos de dados</div><div class="t" style="left:938.65px;top:315.74px;font-size:10px;color:#252423;transform:scaleX(0.9626);">aqui</div><div class="t" style="left:1033.00px;top:135.02px;font-size:12.5px;color:#252423;transform:scaleX(0.9777);-webkit-text-stroke:0.4px #252423;">Visualizações</div><svg class="a" style="left:1150.8px;top:136.5px;" width="10" height="9" viewBox="0 0 10 9"><path d="M0.8 0.8 L4.5 4.5 L0.8 8.2 M5 0.8 L8.7 4.5 L5 8.2" fill="none" stroke="#3b3a39" stroke-width="1.1"/></svg><div class="t" style="left:1032.80px;top:156.08px;font-size:10.3px;color:#252423;transform:scaleX(0.9205);-webkit-text-stroke:0.35px #252423;">Criar visual</div><div class="a" style="left:1032.8px;top:170px;width:25px;height:24.4px;background:#d6d6d6;border-radius:1px;"></div><svg class="a" style="left:1036px;top:173px;" width="19" height="19" viewBox="0 0 19 19"><rect x="0" y="0" width="19" height="2" fill="#1f6e5c"/><rect x="0" y="3.5" width="19" height="6.5" fill="#1f7a62"/><rect x="0" y="11.5" width="19" height="7" fill="#1f7a62"/><path d="M0 6.8 H19 M0 15 H19" stroke="#7fc3ae" stroke-width="0.8" stroke-dasharray="1.2 1.2"/></svg><svg class="a" style="left:1087px;top:173px;" width="20" height="19" viewBox="0 0 20 19"><path d="M0.8 0.8 H9 L13 5 V18.2 H0.8 Z" fill="none" stroke="#252423" stroke-width="1.1"/><path d="M9 0.8 V5 H13" fill="none" stroke="#252423" stroke-width="1"/><path d="M5 18 L18 8.5 L19 10 L8 18.2" fill="none" stroke="#252423" stroke-width="1.1"/><path d="M7 17 L17 9.5" stroke="#252423" stroke-width="0.7"/></svg><svg class="a" style="left:1137.5px;top:173px;" width="20" height="19.5" viewBox="0 0 20 19.5"><circle cx="8.5" cy="8.5" r="7.8" fill="none" stroke="#252423" stroke-width="1.2"/><path d="M14 14 L19 19" stroke="#252423" stroke-width="1.6"/><path d="M3 9 Q8 6 14 9 M4 10 V14 M7 10 V16 M10 10 V16 M13 10 V14" fill="none" stroke="#252423" stroke-width="0.9"/></svg><svg class="a" style="left:1026px;top:198px;" width="141" height="7" viewBox="0 0 141 7"><path d="M0 5.5 H13.5 L19.5 0.8 L25.5 5.5 H141" fill="none" stroke="#d2d0ce" stroke-width="1"/></svg><svg class="a" style="left:1034.3px;top:213.1px;opacity:0.88;" width="15" height="15" viewBox="0 0 15 15"><path d="M1 0.5 V14 H14.5" fill="none" stroke="#505050" stroke-width="1.1"/><rect x="1.5" y="1.5" width="9" height="3.5" fill="#66a6e0" stroke="#505050" stroke-width="0.9"/><rect x="1.5" y="6.5" width="7" height="2.5" fill="#fff" stroke="#505050" stroke-width="0.9"/><rect x="1.5" y="10" width="12" height="2.5" fill="#fff" stroke="#505050" stroke-width="0.9"/></svg><svg class="a" style="left:1055.8px;top:213.1px;opacity:0.88;" width="15" height="15" viewBox="0 0 15 15"><path d="M1 0.5 V14 H14.5" fill="none" stroke="#505050" stroke-width="1.1"/><rect x="3" y="1.5" width="2.5" height="12" fill="#fff" stroke="#505050" stroke-width="0.9"/><rect x="6.5" y="5" width="3" height="8.5" fill="#66a6e0" stroke="#505050" stroke-width="0.9"/><rect x="11" y="2.5" width="2.5" height="11" fill="#fff" stroke="#505050" stroke-width="0.9"/></svg><svg class="a" style="left:1078.0px;top:213.1px;opacity:0.88;" width="15" height="15" viewBox="0 0 15 15"><path d="M1 0.5 V14 H14.5" fill="none" stroke="#505050" stroke-width="1.1"/><rect x="1.5" y="1" width="12.5" height="3" fill="#66a6e0" stroke="#505050" stroke-width="0.9"/><rect x="1.5" y="5" width="8" height="3" fill="#fff" stroke="#505050" stroke-width="0.9"/><rect x="1.5" y="9" width="11" height="3" fill="#ddd" stroke="#505050" stroke-width="0.9"/></svg><svg class="a" style="left:1099.9px;top:213.1px;opacity:0.88;" width="15" height="15" viewBox="0 0 15 15"><path d="M1 0.5 V14 H14.5" fill="none" stroke="#505050" stroke-width="1.1"/><rect x="1.5" y="0.5" width="3.5" height="13" fill="#66a6e0" stroke="#505050" stroke-width="0.9"/><rect x="6" y="6" width="2.5" height="7.5" fill="#fff" stroke="#505050" stroke-width="0.9"/><rect x="9.5" y="3.5" width="2.5" height="10" fill="#fff" stroke="#505050" stroke-width="0.9"/><rect x="12.5" y="4.5" width="2" height="9" fill="#fff" stroke="#505050" stroke-width="0.9"/></svg><svg class="a" style="left:1121.5px;top:213.1px;opacity:0.88;" width="15" height="15" viewBox="0 0 15 15"><path d="M1 0.5 V14 H14.5" fill="none" stroke="#505050" stroke-width="1.1"/><rect x="1.5" y="1" width="13" height="3" fill="#66a6e0" stroke="#505050" stroke-width="0.9"/><rect x="1.5" y="5.5" width="13" height="3" fill="#ddd" stroke="#505050" stroke-width="0.9"/><rect x="1.5" y="10" width="13" height="2.5" fill="#eee" stroke="#505050" stroke-width="0.9"/></svg><svg class="a" style="left:1143.4px;top:213.1px;opacity:0.88;" width="15" height="15" viewBox="0 0 15 15"><path d="M1 0.5 V14 H14.5" fill="none" stroke="#505050" stroke-width="1.1"/><rect x="2" y="1" width="3" height="12.5" fill="#66a6e0" stroke="#505050" stroke-width="0.9"/><rect x="6.5" y="1" width="3" height="12.5" fill="#ddd" stroke="#505050" stroke-width="0.9"/><rect x="11" y="1" width="3" height="12.5" fill="#eee" stroke="#505050" stroke-width="0.9"/></svg><svg class="a" style="left:1034.3px;top:234.8px;opacity:0.88;" width="15" height="15" viewBox="0 0 15 15"><path d="M1 0.5 V14 H14.5" fill="none" stroke="#505050" stroke-width="1.1"/><path d="M2 11 L5 3 L7 7 L9 3 L11 6 L14 4" fill="none" stroke="#505050" stroke-width="1.1"/></svg><svg class="a" style="left:1055.8px;top:234.8px;opacity:0.88;" width="15" height="15" viewBox="0 0 15 15"><path d="M0.5 14 L5 2 L8 8 L11 2 L14.5 14 Z" fill="#66a6e0" stroke="#505050" stroke-width="1.1"/><path d="M0.5 14 L5 2 L8 8 L6 10 Z" fill="#fff" opacity="0.6"/></svg><svg class="a" style="left:1078.0px;top:234.8px;opacity:0.88;" width="15" height="15" viewBox="0 0 15 15"><path d="M1 0.5 V14 H14.5" fill="none" stroke="#505050" stroke-width="1.1"/><path d="M1.5 9 L5 5 L8 8 L11 3 L14 6 V13.5 H1.5Z" fill="#bcdcf4" stroke="#505050" stroke-width="1"/><path d="M1.5 12 L5 8 L8 11 L11 7 L14 10" fill="none" stroke="#66a6e0" stroke-width="1.2"/></svg><svg class="a" style="left:1099.9px;top:234.8px;opacity:0.88;" width="15" height="15" viewBox="0 0 15 15"><rect x="1" y="1" width="13.5" height="13" fill="#66a6e0" stroke="#505050" stroke-width="1"/><rect x="3" y="6" width="2" height="7" fill="#fff"/><rect x="7" y="5" width="2" height="8" fill="#fff"/><rect x="10.5" y="8" width="2" height="5" fill="#fff"/></svg><svg class="a" style="left:1121.5px;top:234.8px;opacity:0.88;" width="15" height="15" viewBox="0 0 15 15"><path d="M1 0.5 V14 H14.5" fill="none" stroke="#505050" stroke-width="1.1"/><rect x="2.5" y="3" width="2.5" height="10.5" fill="#66a6e0" stroke="#505050" stroke-width="0.8"/><rect x="6" y="6" width="2.5" height="7.5" fill="#fff" stroke="#505050" stroke-width="0.8"/><rect x="10" y="4" width="2.5" height="9.5" fill="#fff" stroke="#505050" stroke-width="0.8"/><path d="M2 8 L7 4 L13 7" fill="none" stroke="#505050" stroke-width="0.9"/></svg><svg class="a" style="left:1143.4px;top:234.8px;opacity:0.88;" width="15" height="15" viewBox="0 0 15 15"><path d="M1 0.5 V14 H14.5" fill="none" stroke="#505050" stroke-width="1.1"/><rect x="2.5" y="5" width="2.5" height="8.5" fill="#66a6e0" stroke="#505050" stroke-width="0.8"/><rect x="6.5" y="1.5" width="3" height="12" fill="#fff" stroke="#505050" stroke-width="0.8"/><rect x="11" y="6" width="2.5" height="7.5" fill="#bcdcf4" stroke="#505050" stroke-width="0.8"/></svg><svg class="a" style="left:1034.3px;top:256.5px;opacity:0.88;" width="15" height="15" viewBox="0 0 15 15"><path d="M1 0.5 V14 H14.5" fill="none" stroke="#505050" stroke-width="1.1"/><path d="M2 13 V8 L5 4 L8 6 L12 2 V13Z" fill="#9cc49a" stroke="#505050" stroke-width="0.9"/><path d="M6 13 V7 L12 3" fill="none" stroke="#e0893c" stroke-width="1"/></svg><svg class="a" style="left:1055.8px;top:256.5px;opacity:0.88;" width="15" height="15" viewBox="0 0 15 15"><path d="M1 0.5 V14 H14.5" fill="none" stroke="#505050" stroke-width="1.1"/><rect x="2.5" y="6" width="2.5" height="7.5" fill="#ddd" stroke="#505050" stroke-width="0.9"/><rect x="6" y="3.5" width="2.5" height="10" fill="#bcdcf4" stroke="#505050" stroke-width="0.9"/><rect x="10" y="1" width="3" height="12.5" fill="#66a6e0" stroke="#505050" stroke-width="0.9"/></svg><svg class="a" style="left:1078.0px;top:256.5px;opacity:0.88;" width="15" height="15" viewBox="0 0 15 15"><rect x="0.5" y="1" width="14" height="3" fill="#66a6e0" stroke="#505050" stroke-width="0.7"/><rect x="2" y="5" width="11" height="3" fill="#66a6e0" stroke="#505050" stroke-width="0.7"/><rect x="3.5" y="9" width="8" height="2.5" fill="#66a6e0" stroke="#505050" stroke-width="0.7"/><rect x="5" y="12" width="5" height="2.5" fill="#66a6e0"/></svg><svg class="a" style="left:1099.9px;top:256.5px;opacity:0.88;" width="15" height="15" viewBox="0 0 15 15"><path d="M1 0.5 V14 H14.5" fill="none" stroke="#505050" stroke-width="1.1"/><circle cx="4" cy="10.5" r="1" fill="#505050"/><circle cx="7" cy="7" r="1" fill="#505050"/><circle cx="12" cy="2.5" r="1.3" fill="#505050"/><circle cx="10" cy="10" r="1" fill="#505050"/><path d="M3 12 L6 8" stroke="#505050" stroke-width="0.8"/></svg><svg class="a" style="left:1121.5px;top:256.5px;opacity:0.88;" width="15" height="15" viewBox="0 0 15 15"><circle cx="7.5" cy="7.5" r="6.5" fill="#fff" stroke="#505050" stroke-width="1.1"/><path d="M7.5 7.5 V1 A6.5 6.5 0 0 1 13 11 Z" fill="#66a6e0" stroke="#505050" stroke-width="0.8"/></svg><svg class="a" style="left:1143.4px;top:256.5px;opacity:0.88;" width="15" height="15" viewBox="0 0 15 15"><circle cx="7.5" cy="7.5" r="6.8" fill="#66a6e0" stroke="#505050" stroke-width="0.8"/><circle cx="7.5" cy="7.5" r="3" fill="#fff" stroke="#505050" stroke-width="0.7"/><path d="M7.5 7.5 L1 9 A6.8 6.8 0 0 1 5 1 Z" fill="#fff" stroke="#505050" stroke-width="0.7"/></svg><svg class="a" style="left:1034.3px;top:277.7px;opacity:0.88;" width="15" height="15" viewBox="0 0 15 15"><rect x="1" y="1" width="13" height="13" fill="#fff" stroke="#505050" stroke-width="1"/><rect x="1.5" y="1.5" width="6" height="12" fill="#66a6e0"/><path d="M7.5 1 V14 M7.5 7 H14 M11 7 V14" stroke="#505050" stroke-width="0.9"/></svg><svg class="a" style="left:1055.8px;top:277.7px;opacity:0.88;" width="15" height="15" viewBox="0 0 15 15"><circle cx="7.5" cy="6.5" r="5.8" fill="#5aa870" stroke="#505050" stroke-width="1"/><path d="M5 3 Q8 6 6 9 M9 2 Q11 5 10 10" fill="none" stroke="#cfe9d4" stroke-width="1.2"/><path d="M3 14 H12" stroke="#505050" stroke-width="1.2"/></svg><svg class="a" style="left:1078.0px;top:277.7px;opacity:0.88;" width="15" height="15" viewBox="0 0 15 15"><path d="M1 2 L5 3 L8 1.5 L11 3 L14 2 V10 L8 14 L1 10 Z" fill="#66a6e0" stroke="#505050" stroke-width="1"/><path d="M5 3 V9 L9 11 M9 5 L12 8" fill="none" stroke="#fff" stroke-width="0.9"/></svg><svg class="a" style="left:1099.9px;top:277.7px;opacity:0.88;" width="15" height="15" viewBox="0 0 15 15"><path d="M1 2 L5 3 L8 1.5 L11 3 L14 2 V10 L8 14 L1 10 Z" fill="#eaf3fb" stroke="#505050" stroke-width="1"/><path d="M5 3 V9 L9 11 M9 5 L12 8" fill="none" stroke="#66a6e0" stroke-width="0.9"/></svg><svg class="a" style="left:1121.5px;top:277.7px;opacity:0.88;" width="15" height="15" viewBox="0 0 15 15"><path d="M7.5 0.5 L13 14 L7.5 10 L2 14 Z" fill="#66a6e0"/></svg><svg class="a" style="left:1143.4px;top:277.7px;opacity:0.88;" width="15" height="15" viewBox="0 0 15 15"><path d="M1 12 A6.5 6.5 0 0 1 14 12 Z" fill="#dfe9f3" stroke="#505050" stroke-width="1.1"/><path d="M4 11 L6 8 M7.5 11 V7 M11 11 L9 8" stroke="#505050" stroke-width="0.9"/></svg><svg class="a" style="left:1034.3px;top:299.5px;opacity:0.88;" width="15" height="15" viewBox="0 0 15 15"><rect x="0.5" y="3" width="14" height="9.5" fill="#fff" stroke="#505050" stroke-width="1.1"/><rect x="3" y="5.5" width="9" height="4.5" fill="#bcdcf4" stroke="#66a6e0" stroke-width="0.8"/></svg><svg class="a" style="left:1055.8px;top:299.5px;opacity:0.88;" width="15" height="15" viewBox="0 0 15 15"><rect x="1" y="1.5" width="13" height="12.5" fill="#fff" stroke="#505050" stroke-width="1.1"/><rect x="3" y="5" width="9" height="1.8" fill="#66a6e0"/><rect x="3" y="8.5" width="9" height="1.8" fill="#66a6e0"/></svg><svg class="a" style="left:1078.0px;top:299.5px;opacity:0.88;" width="15" height="15" viewBox="0 0 15 15"><rect x="1" y="2" width="13" height="11" fill="#fff" stroke="#505050" stroke-width="1.1"/><rect x="3" y="4" width="4.5" height="3" fill="#66a6e0"/><rect x="7.5" y="4" width="4.5" height="3" fill="#e0893c"/><rect x="3" y="8" width="9" height="2.5" fill="#bcdcf4"/></svg><svg class="a" style="left:1099.9px;top:299.5px;opacity:0.88;" width="15" height="15" viewBox="0 0 15 15"><rect x="0.8" y="1" width="13.5" height="12" fill="#fff" stroke="#505050" stroke-width="1.1"/><path d="M0.8 4 H14.3" stroke="#505050" stroke-width="1"/><rect x="3" y="7" width="4" height="4" fill="none" stroke="#505050" stroke-width="0.9"/><rect x="8" y="8" width="4" height="6" fill="#fff" stroke="#505050" stroke-width="0.9"/></svg><svg class="a" style="left:1121.5px;top:299.5px;opacity:0.88;" width="15" height="15" viewBox="0 0 15 15"><rect x="1" y="1" width="13" height="13" fill="#fff" stroke="#505050" stroke-width="1.1"/><path d="M1 4.5 H14 M1 9 H14 M5.5 1 V14 M10 1 V14" stroke="#505050" stroke-width="0.9"/></svg><svg class="a" style="left:1143.4px;top:299.5px;opacity:0.88;" width="15" height="15" viewBox="0 0 15 15"><rect x="1" y="1" width="13" height="13" fill="#66a6e0" stroke="#505050" stroke-width="1.1"/><rect x="4.5" y="4.5" width="9" height="5" fill="#fff"/><path d="M1 4.5 H14 M1 9.5 H14 M4.5 1 V14 M9 4.5 V9.5" stroke="#505050" stroke-width="0.8"/></svg><svg class="a" style="left:1034.3px;top:321.1px;opacity:0.88;" width="15" height="15" viewBox="0 0 15 15"><text x="2" y="13.5" font-family="Liberation Sans" font-weight="bold" font-size="13" fill="#3a7fc0">R</text></svg><svg class="a" style="left:1055.8px;top:321.1px;opacity:0.88;" width="15" height="15" viewBox="0 0 15 15"><text x="-0.5" y="12.5" font-family="Liberation Sans" font-weight="bold" font-size="12" fill="#3a7fc0" textLength="16" lengthAdjust="spacingAndGlyphs">Py</text></svg><svg class="a" style="left:1078.0px;top:321.1px;opacity:0.88;" width="15" height="15" viewBox="0 0 15 15"><path d="M1 0.5 V14 H14.5" fill="none" stroke="#505050" stroke-width="1.1"/><rect x="3" y="4" width="6" height="4" fill="#fff" stroke="#505050" stroke-width="0.9"/><path d="M9 4 H12" stroke="#505050" stroke-width="0.9"/><circle cx="12.5" cy="3" r="1.6" fill="#66a6e0" stroke="#505050" stroke-width="0.6"/><path d="M3 10 H8" stroke="#505050" stroke-width="0.9"/></svg><svg class="a" style="left:1099.9px;top:321.1px;opacity:0.88;" width="15" height="15" viewBox="0 0 15 15"><rect x="0.5" y="5" width="5" height="4" fill="#66a6e0" stroke="#505050" stroke-width="0.7"/><rect x="8" y="0.5" width="6" height="14" fill="#66a6e0" stroke="#505050" stroke-width="0.9"/><path d="M5.5 7 H8 M8 4 H14 M8 7.5 H14 M8 11 H14" stroke="#505050" stroke-width="0.7"/></svg><svg class="a" style="left:1121.5px;top:321.1px;opacity:0.88;" width="15" height="15" viewBox="0 0 15 15"><path d="M1 1.5 H14 V11 H5 L3 13.5 V11 H1 Z" fill="#fff" stroke="#505050" stroke-width="1.1"/><path d="M3 11 L3 13.5" stroke="#66a6e0" stroke-width="1.2"/></svg><svg class="a" style="left:1143.4px;top:321.1px;opacity:0.88;" width="15" height="15" viewBox="0 0 15 15"><path d="M2 0.8 H9.5 L13 4.3 V14.2 H2 Z" fill="#fff" stroke="#505050" stroke-width="1.1"/><path d="M9.5 0.8 V4.3 H13 M2 8 H9 V14" fill="none" stroke="#505050" stroke-width="0.9"/></svg><svg class="a" style="left:1034.3px;top:342.5px;opacity:0.88;" width="15" height="15" viewBox="0 0 15 15"><path d="M3 1 H12 V6 Q12 10 7.5 10 Q3 10 3 6 Z" fill="#d8e6f2" stroke="#505050" stroke-width="1"/><path d="M3 2.5 H1 V5 Q1 7 3 7 M12 2.5 H14 V5 Q14 7 12 7" fill="none" stroke="#505050" stroke-width="0.9"/><rect x="6.5" y="10" width="2" height="2" fill="#505050"/><rect x="4" y="12" width="7" height="2.5" fill="#4e86b8"/></svg><svg class="a" style="left:1055.8px;top:342.5px;opacity:0.88;" width="15" height="15" viewBox="0 0 15 15"><path d="M1.5 0.8 H9 L13 4.8 V14.2 H1.5 Z" fill="#fff" stroke="#505050" stroke-width="1.1"/><rect x="3.5" y="8.5" width="3" height="3" fill="#505050"/><path d="M7 11.5 H11 V7" fill="none" stroke="#505050" stroke-width="0.9"/></svg><svg class="a" style="left:1078.0px;top:342.5px;opacity:0.88;" width="15" height="15" viewBox="0 0 15 15"><rect x="2" y="4" width="12.5" height="9" fill="#fff" stroke="#505050" stroke-width="1"/><path d="M5 12 L9 8 L12 10" fill="none" stroke="#66a6e0" stroke-width="0.8"/><ellipse cx="3.5" cy="4" rx="2.8" ry="3.5" fill="#e0893c"/></svg><svg class="a" style="left:1099.9px;top:342.5px;opacity:0.88;" width="15" height="15" viewBox="0 0 15 15"><rect x="2" y="2" width="12.5" height="11" fill="#fff" stroke="#505050" stroke-width="1"/><path d="M2 5 H14.5 M5 8 H10 V14" fill="none" stroke="#505050" stroke-width="1"/><ellipse cx="3.5" cy="4" rx="2.8" ry="3.5" fill="#e0893c"/></svg><svg class="a" style="left:1121.5px;top:342.5px;opacity:0.88;" width="15" height="15" viewBox="0 0 15 15"><rect x="1" y="1.5" width="13" height="12.5" fill="#d9ecf8" stroke="#3b7fb8" stroke-width="1.1"/><path d="M5 14 L10 5 H13" fill="none" stroke="#3b7fb8" stroke-width="1.4"/><rect x="10.5" y="9" width="3.5" height="5" fill="#c0643a"/><ellipse cx="3" cy="4" rx="2.5" ry="3" fill="#c0643a"/></svg><svg class="a" style="left:1143.4px;top:342.5px;opacity:0.88;" width="15" height="15" viewBox="0 0 15 15"><path d="M7.5 0.8 L14.2 7.5 L7.5 14.2 L0.8 7.5 Z" fill="#efe3f5" stroke="#a070c0" stroke-width="1.3" stroke-linejoin="round"/><circle cx="7.5" cy="5" r="1.1" fill="#a070c0"/><circle cx="7.5" cy="10" r="1.1" fill="#a070c0"/><path d="M7.5 5 V10" stroke="#a070c0" stroke-width="0.8"/></svg><svg class="a" style="left:1034.3px;top:363.9px;opacity:0.88;" width="15" height="15" viewBox="0 0 15 15"><path d="M1 2 H7 L13 7.5 L7 13 H1 L6.5 7.5 Z" fill="#d5ecf9" stroke="#3f7ea8" stroke-width="1.1" stroke-linejoin="round"/><path d="M4 2 L10 7.5 L4 13" fill="none" stroke="#3f7ea8" stroke-width="1"/></svg><svg class="a" style="left:1055.8px;top:363.9px;opacity:0.88;" width="15" height="15" viewBox="0 0 15 15"><circle cx="2.5" cy="8" r="1.1" fill="#505050"/><circle cx="7.5" cy="8" r="1.1" fill="#505050"/><circle cx="12.5" cy="8" r="1.1" fill="#505050"/></svg><div class="a" style="left:1027px;top:385px;width:139px;height:1px;background:#dcdcdc;"></div><div class="t" style="left:1035.10px;top:394.78px;font-size:10.3px;color:#252423;transform:scaleX(0.8873);">Valores</div><div class="a" style="left:1030.5px;top:411.6px;width:131px;height:19.5px;border:1px dashed #d6d4d2;background:#fff"></div><div class="t" style="left:1038.80px;top:416.74px;font-size:10px;color:#252423;transform:scaleX(0.9423);">Adicionar campos de dados.</div><div class="a" style="left:1030.5px;top:501.3px;width:131px;height:19.9px;border:1px dashed #d6d4d2;background:#fff"></div><div class="t" style="left:1038.80px;top:506.44px;font-size:10px;color:#252423;transform:scaleX(0.9542);">Adicionar campos de detal...</div><div class="t" style="left:1035.10px;top:442.08px;font-size:10.3px;color:#252423;transform:scaleX(0.9328);">Detalhamento</div><div class="t" style="left:1035.10px;top:461.88px;font-size:10.3px;color:#252423;transform:scaleX(0.9209);">Entre relatórios</div><div class="t" style="left:1035.10px;top:481.88px;font-size:10.3px;color:#252423;transform:scaleX(0.9487);">Manter todos os filtros</div><div class="a" style="left:1134.4px;top:460.9px;width:23.4px;height:11px;border:1px solid #3b3a39;border-radius:6px;background:#fff"></div><div class="a" style="left:1137px;top:463.3px;width:6.4px;height:6.4px;border-radius:50%;background:#444"></div><div class="t" style="left:1145.00px;top:464.99px;font-size:4.5px;color:#888;">Off</div><div class="a" style="left:1133.8px;top:481.5px;width:24.5px;height:11px;border-radius:6px;background:#17694f"></div><div class="a" style="left:1150.2px;top:484px;width:6px;height:6px;border-radius:2px;background:#fff"></div><div class="t" style="left:1137.50px;top:484.07px;font-size:7px;color:#fff;font-weight:bold;transform:scaleX(0.9181);">Or</div><div class="t" style="left:1174.70px;top:135.22px;font-size:12.5px;color:#252423;transform:scaleX(0.9603);-webkit-text-stroke:0.4px #252423;">Dados</div><svg class="a" style="left:1291.6px;top:136.6px;" width="10" height="9" viewBox="0 0 10 9"><path d="M0.8 0.8 L4.5 4.5 L0.8 8.2 M5 0.8 L8.7 4.5 L5 8.2" fill="none" stroke="#3b3a39" stroke-width="1.1"/></svg><div class="a" style="left:1172.2px;top:160.7px;width:131.3px;height:18.8px;border:1px solid #a19f9d;border-radius:2px;background:#fff"></div><svg class="a" style="left:1177.6px;top:164.2px;" width="12" height="12" viewBox="0 0 12 12"><circle cx="7.3" cy="4.7" r="3.7" fill="none" stroke="#3b3a39" stroke-width="1.1"/><path d="M4.6 7.4 L0.8 11.2" stroke="#3b3a39" stroke-width="1.2"/></svg><div class="t" style="left:1196.30px;top:164.69px;font-size:11px;color:#605e5c;transform:scaleX(0.9220);">Pesquisar</div><svg class="a" style="left:1179px;top:191.4px;" width="6" height="10" viewBox="0 0 6 10"><path d="M0.8 0.8 L4.8 4.6 L0.8 8.4" fill="none" stroke="#555" stroke-width="1"/></svg><svg class="a" style="left:1189.2px;top:191.4px;" width="11" height="9.5" viewBox="0 0 11 9.5"><rect x="0.6" y="0.6" width="9.8" height="8.3" fill="none" stroke="#555" stroke-width="1.1"/><rect x="0.6" y="0.6" width="9.8" height="2" fill="#555"/><path d="M0.6 4.9 H10.4 M0.6 7 H10.4 M3.9 0.6 V8.9 M7.2 0.6 V8.9" stroke="#555" stroke-width="0.8"/></svg><div class="t" style="left:1204.00px;top:191.43px;font-size:10.6px;color:#323130;transform:scaleX(0.8981);">DimConta</div><svg class="a" style="left:1179px;top:209.92000000000002px;" width="6" height="10" viewBox="0 0 6 10"><path d="M0.8 0.8 L4.8 4.6 L0.8 8.4" fill="none" stroke="#555" stroke-width="1"/></svg><svg class="a" style="left:1189.2px;top:209.92000000000002px;" width="11" height="9.5" viewBox="0 0 11 9.5"><rect x="0.6" y="0.6" width="9.8" height="8.3" fill="none" stroke="#555" stroke-width="1.1"/><rect x="0.6" y="0.6" width="9.8" height="2" fill="#555"/><path d="M0.6 4.9 H10.4 M0.6 7 H10.4 M3.9 0.6 V8.9 M7.2 0.6 V8.9" stroke="#555" stroke-width="0.8"/></svg><div class="t" style="left:1204.00px;top:209.95px;font-size:10.6px;color:#323130;transform:scaleX(0.8834);">DimData</div><svg class="a" style="left:1179px;top:228.44px;" width="6" height="10" viewBox="0 0 6 10"><path d="M0.8 0.8 L4.8 4.6 L0.8 8.4" fill="none" stroke="#555" stroke-width="1"/></svg><svg class="a" style="left:1189.2px;top:228.44px;" width="11" height="9.5" viewBox="0 0 11 9.5"><rect x="0.6" y="0.6" width="9.8" height="8.3" fill="none" stroke="#555" stroke-width="1.1"/><rect x="0.6" y="0.6" width="9.8" height="2" fill="#555"/><path d="M0.6 4.9 H10.4 M0.6 7 H10.4 M3.9 0.6 V8.9 M7.2 0.6 V8.9" stroke="#555" stroke-width="0.8"/></svg><div class="t" style="left:1204.00px;top:228.47px;font-size:10.6px;color:#323130;transform:scaleX(0.9061);">DimCategoriaProduto</div><svg class="a" style="left:1179px;top:246.96px;" width="6" height="10" viewBox="0 0 6 10"><path d="M0.8 0.8 L4.8 4.6 L0.8 8.4" fill="none" stroke="#555" stroke-width="1"/></svg><svg class="a" style="left:1189.2px;top:246.96px;" width="11" height="9.5" viewBox="0 0 11 9.5"><rect x="0.6" y="0.6" width="9.8" height="8.3" fill="none" stroke="#555" stroke-width="1.1"/><rect x="0.6" y="0.6" width="9.8" height="2" fill="#555"/><path d="M0.6 4.9 H10.4 M0.6 7 H10.4 M3.9 0.6 V8.9 M7.2 0.6 V8.9" stroke="#555" stroke-width="0.8"/></svg><div class="t" style="left:1204.00px;top:246.99px;font-size:10.6px;color:#323130;transform:scaleX(0.8904);">DimCenário</div><svg class="a" style="left:1179px;top:265.47999999999996px;" width="6" height="10" viewBox="0 0 6 10"><path d="M0.8 0.8 L4.8 4.6 L0.8 8.4" fill="none" stroke="#555" stroke-width="1"/></svg><svg class="a" style="left:1189.2px;top:265.47999999999996px;" width="11" height="9.5" viewBox="0 0 11 9.5"><rect x="0.6" y="0.6" width="9.8" height="8.3" fill="none" stroke="#555" stroke-width="1.1"/><rect x="0.6" y="0.6" width="9.8" height="2" fill="#555"/><path d="M0.6 4.9 H10.4 M0.6 7 H10.4 M3.9 0.6 V8.9 M7.2 0.6 V8.9" stroke="#555" stroke-width="0.8"/></svg><div class="t" style="left:1204.00px;top:265.51px;font-size:10.6px;color:#323130;transform:scaleX(0.8767);">FatoPlanoEstratégico</div><div class="a" style="left:2px;top:126.5px;width:2px;height:31px;background:#2f8a78;"></div><svg class="a" style="left:12.5px;top:135.5px;" width="12" height="11.5" viewBox="0 0 12 11.5"><path d="M0.7 0.5 V10.8 H11.5" fill="none" stroke="#3b3a39" stroke-width="1.3"/><rect x="2.6" y="4.5" width="2.2" height="6" fill="none" stroke="#3b3a39" stroke-width="1"/><rect x="5.8" y="6" width="2.2" height="4.5" fill="none" stroke="#3b3a39" stroke-width="1"/><rect x="9" y="1" width="2.4" height="9.5" fill="#3b3a39"/></svg><svg class="a" style="left:12.3px;top:166.2px;" width="12.5" height="11.5" viewBox="0 0 12.5 11.5"><rect x="0.6" y="0.6" width="11.3" height="10.3" fill="none" stroke="#555" stroke-width="1.1"/><rect x="0.6" y="0.6" width="11.3" height="2.2" fill="#666"/><path d="M0.6 5.5 H11.9 M0.6 8.2 H11.9 M4.4 0.6 V10.9 M8.1 0.6 V10.9" stroke="#555" stroke-width="0.9"/></svg><svg class="a" style="left:11.3px;top:196.2px;" width="14.5" height="13.5" viewBox="0 0 14.5 13.5"><rect x="6.5" y="0.8" width="7.5" height="12" fill="none" stroke="#555" stroke-width="1.1"/><path d="M6.5 4.8 H14 M6.5 8.8 H14 M10 0.8 V4.8" stroke="#555" stroke-width="0.9"/><rect x="0.8" y="4" width="5.7" height="6" fill="none" stroke="#555" stroke-width="1.1"/></svg><svg class="a" style="left:11.3px;top:227.2px;" width="14" height="13.5" viewBox="0 0 14 13.5"><path d="M4 0.5 V10.5 Q4 12.8 1.8 12.8 H0.5" fill="none" stroke="#555" stroke-width="1.2"/><path d="M7 12.8 V6 Q7 4 9 4 H10.5 L13.3 7 V12.8 Z" fill="none" stroke="#555" stroke-width="1.1"/><path d="M8.5 10.5 H11.5" stroke="#555" stroke-width="0.9"/></svg><svg class="a" style="left:42.5px;top:774.5px;" width="17" height="12" viewBox="0 0 17 12"><rect x="0.6" y="0.6" width="15.8" height="9" fill="none" stroke="#3b3a39" stroke-width="1.1"/><path d="M6 11.4 H11" stroke="#3b3a39" stroke-width="1.1"/></svg><div class="a" style="left:42px;top:791px;width:19.2px;height:2.6px;background:#1d6b5a;border-radius:1px;"></div><svg class="a" style="left:80.5px;top:773px;" width="10" height="16" viewBox="0 0 10 16"><rect x="0.6" y="0.6" width="8.8" height="14.8" rx="1" fill="none" stroke="#3b3a39" stroke-width="1.1"/><path d="M4 12.5 H6" stroke="#3b3a39" stroke-width="1"/></svg><svg class="a" style="left:106px;top:780.5px;" width="6" height="7" viewBox="0 0 6 7"><path d="M5 0.8 L1.5 3.5 L5 6.2" fill="none" stroke="#c8c6c4" stroke-width="1.1"/></svg><svg class="a" style="left:123px;top:780.5px;" width="6" height="7" viewBox="0 0 6 7"><path d="M1 0.8 L4.5 3.5 L1 6.2" fill="none" stroke="#c8c6c4" stroke-width="1.1"/></svg><div class="a" style="left:133.5px;top:769px;width:58.7px;height:27px;background:#ffffff;"></div><div class="a" style="left:133.5px;top:793.4px;width:58.7px;height:2.6px;background:#1d6b5a;"></div><div class="t" style="left:148.80px;top:778.41px;font-size:10.5px;color:#252423;transform:scaleX(0.8444);-webkit-text-stroke:0.4px #252423;">Page 1</div><div class="a" style="left:192.2px;top:769px;width:31.2px;height:27.3px;background:#217a64;"></div><svg class="a" style="left:203.5px;top:778.5px;" width="9" height="9" viewBox="0 0 9 9"><path d="M4.5 0 V9 M0 4.5 H9" stroke="#fff" stroke-width="1.8"/></svg><div class="t" style="left:6.70px;top:802.26px;font-size:9.5px;color:#323130;transform:scaleX(0.9240);">Page 1 of 1</div><div class="a" style="left:1142.3px;top:805.5px;width:3.5px;height:1px;background:#555;"></div><div class="a" style="left:1150.7px;top:805.6px;width:76.3px;height:0.9px;background:#777;"></div><div class="a" style="left:1181.2px;top:801.7px;width:3px;height:8.3px;background:#444;"></div><div class="a" style="left:1188.7px;top:803.5px;width:0.9px;height:4.5px;background:#777;"></div><svg class="a" style="left:1231.5px;top:802px;" width="7" height="7" viewBox="0 0 7 7"><path d="M3.5 0 V7 M0 3.5 H7" stroke="#444" stroke-width="1"/></svg><div class="t" style="left:1248.20px;top:801.26px;font-size:9.5px;color:#444;transform:scaleX(0.8836);">84%</div><svg class="a" style="left:1280.5px;top:801.5px;" width="13" height="10" viewBox="0 0 13 10"><rect x="0.6" y="0.6" width="11.8" height="8.8" fill="none" stroke="#444" stroke-width="1.1"/><path d="M2.5 3 V2.5 H4 M10.5 7 V7.5 H9" fill="none" stroke="#444" stroke-width="0.9"/></svg></body></html>
